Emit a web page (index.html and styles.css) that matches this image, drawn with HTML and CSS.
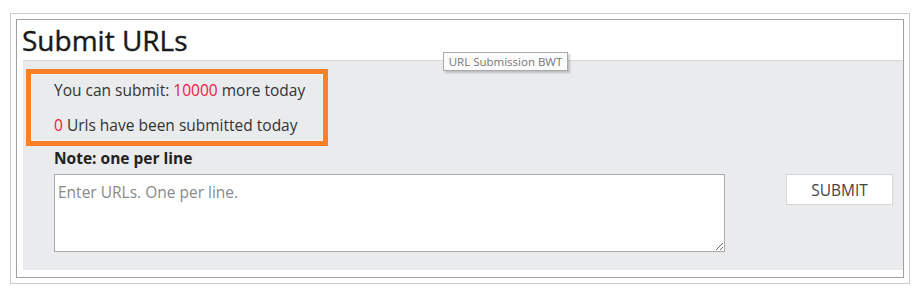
FILE: index.html
```html
<!DOCTYPE html>
<html lang="en">

<head>
    <meta charset="UTF-8">
    <meta name="viewport" content="width=device-width, initial-scale=1.0">
    <title>Submit URLs</title>
    <link rel="stylesheet" href="styles.css">
</head>

<body>
    <div class="frame">
        <div class="box">
            <h1>Submit URLs</h1>
            <div class="tooltip">URL Submission BWT</div>

            <div class="panel">
                <!-- 오늘 제출 현황 -->
                <div class="stats">
                    <p>You can submit: <span class="num">10000</span> more today</p>
                    <p><span class="num">0</span> Urls have been submitted today</p>
                </div>

                <div class="form">
                    <label for="urls">Note: one per line</label>
                    <div class="form-row">
                        <textarea id="urls" placeholder="Enter URLs. One per line."></textarea>
                        <button id="submit">SUBMIT</button>
                    </div>
                </div>
            </div>
        </div>
    </div>
</body>

</html>
```

FILE: styles.css
```css
body {
    margin: 0;
    padding: 0;
    background-color: white;
    font-family: "Open Sans", "Noto Sans", sans-serif;
    color: #333;
}

.frame {
    width: 888px;
    margin: 13px 0 0 10px;
    padding: 5px;
    border: 1px solid #cccccc;
}

.box {
    position: relative;
    border: 1px solid #a0a0a0;
    padding-bottom: 7px;
}

h1 {
    margin: 0;
    padding-left: 5px;
    height: 40px;
    line-height: 40px;
    font-size: 28px;
    font-weight: 400;
    color: #1a1a1a;
    -webkit-text-stroke: 0.4px #1a1a1a;
}

.tooltip {
    position: absolute;
    left: 426px;
    top: 32px;
    width: 123px;
    height: 17px;
    line-height: 17px;
    border: 1px solid #aaaaaa;
    background: #fbfbfb;
    box-shadow: 2px 2px 2px rgba(0, 0, 0, 0.2);
    font-size: 11.5px;
    color: #777;
    text-align: center;
}

.panel {
    margin-left: 6px;
    padding: 8px 10px 18px 3px;
    background: #eaebed;
    border-top: 1px solid #d6d8d8;
}

.stats {
    width: 269px;
    padding: 6px 0 6px 23px;
    border: 5px solid #ff7f27;
    box-shadow: inset 0 0 0 1px #f4f4f4;
    font-size: 15.5px;
    line-height: 20px;
}

.stats p {
    margin: 0;
}

.stats p + p {
    margin-top: 15px;
}

.num {
    color: #ee1842;
}

.form {
    margin-top: 2px;
    padding-left: 28px;
}

label {
    display: block;
    font-size: 15.5px;
    font-weight: 700;
    line-height: 20px;
    color: #222;
}

.form-row {
    display: flex;
    align-items: flex-start;
    margin-top: 6px;
}

textarea {
    box-sizing: border-box;
    width: 671px;
    height: 78px;
    padding: 7px 3px;
    border: 1px solid #aaaaaa;
    font-family: inherit;
    font-size: 15.5px;
    line-height: 20px;
    resize: vertical;
}

textarea::placeholder {
    color: #8a8a8a;
}

button {
    box-sizing: border-box;
    margin-left: auto;
    width: 107px;
    height: 31px;
    background: white;
    border: 1px solid #d6d6d6;
    font-family: inherit;
    font-size: 15.5px;
    color: #444;
    cursor: pointer;
}
```
